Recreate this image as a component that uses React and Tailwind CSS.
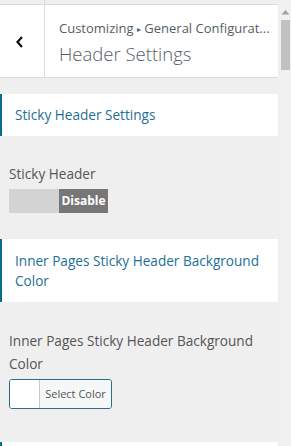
export default function App() {
  return (
    <div className="w-[291px] h-[446px] flex overflow-hidden bg-[#efefef] font-['Open_Sans',sans-serif]">
      <div className="w-[280px] flex flex-col [&>*]:shrink-0">
        <div className="h-[4px] flex">
          <div className="w-[45px] border-r border-[#dcdcdc]" />
        </div>
        <div className="w-[278px] h-[74px] bg-white border-t border-b border-[#dcdcdc] flex">
          <div className="w-[45px] border-r border-[#dcdcdc] flex items-center justify-center">
            <svg width="10" height="14" viewBox="0 0 10 14" className="ml-[-4px] mt-[2px]">
              <path d="M7 2 L2.5 7 L7 12" fill="none" stroke="#111" strokeWidth="2.2" />
            </svg>
          </div>
          <div className="pl-[14px] pt-[14px] flex flex-col">
            <div className="text-[13px] leading-[18px] text-[#555d66] whitespace-nowrap">
              Customizing <span className="text-[8px] align-[1px]">▸</span> General Configurat...
            </div>
            <div className="text-[18.5px] leading-[28px] mt-[2px] font-light text-[#555d66] whitespace-nowrap">
              Header Settings
            </div>
          </div>
        </div>
        <div className="mt-[16px] w-[278px] h-[42px] bg-white border-l-2 border-[#0d6a8f] flex items-center pl-[13px]">
          <span className="text-[13.6px] text-[#1d6f96]">Sticky Header Settings</span>
        </div>
        <div className="pl-[9px] mt-[26px] text-[13.6px] leading-[23px] text-[#555] font-medium">Sticky Header</div>
        <div className="ml-[9px] mt-[4px] w-[99px] h-[24px] flex">
          <div className="w-[50px] bg-[#d3d3d3]" />
          <div className="flex-1 bg-[#777] text-white text-[12px] font-bold flex items-center justify-center">Disable</div>
        </div>
        <div className="mt-[26px] w-[278px] h-[63px] bg-white border-l-2 border-[#0d6a8f] pl-[13px] pt-[12px]">
          <div className="text-[13.6px] leading-[20px] text-[#1d6f96]">Inner Pages Sticky Header Background Color</div>
        </div>
        <div className="pl-[9px] pr-[16px] mt-[27px] text-[13.6px] leading-[23px] text-[#555] font-medium">
          Inner Pages Sticky Header Background Color
        </div>
        <div className="ml-[9px] mt-[4px] w-[103px] h-[30px] flex rounded-[3px] border border-[#2c6d8c] overflow-hidden">
          <div className="w-[30px] bg-white border-r border-[#c8c8c8]" />
          <div className="flex-1 bg-[#f6f7f7] text-[11px] text-[#555] flex items-center justify-center">Select Color</div>
        </div>
        <div className="mt-[33px] w-[278px] h-[40px] bg-white border-l-2 border-[#0d6a8f]" />
      </div>
      <div className="w-[11px] h-full bg-[#f1f1f1] flex flex-col items-center">
        <svg width="9" height="6" viewBox="0 0 9 6" className="mt-[9px]">
          <path d="M0.5 5.5 L4.5 1 L8.5 5.5 Z" fill="#a3a3a3" />
        </svg>
        <div className="mt-[5px] w-[9px] h-[50px] bg-[#c1c1c1]" />
      </div>
    </div>
  );
}
